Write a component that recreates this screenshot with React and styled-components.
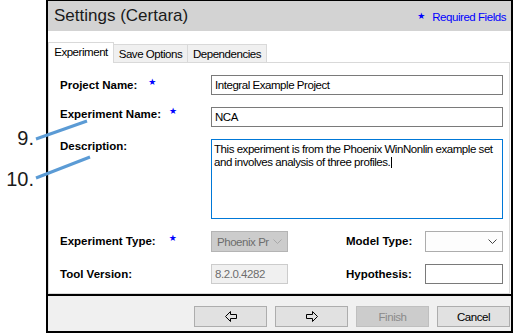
import React from 'react';
import styled, { createGlobalStyle } from 'styled-components';

const FONT = '"Liberation Sans", Arial, sans-serif';

const Global = createGlobalStyle`
  html, body { margin: 0; padding: 0; background: #fff; }
  body { font-family: ${FONT}; width: 515px; height: 334px; overflow: hidden; }
  * { box-sizing: border-box; }
`;

const Page = styled.div`
  position: relative;
  width: 515px;
  height: 334px;
  padding-left: 46px;
`;

const Window = styled.div`
  width: 467px;
  height: 333px;
  border: 2px solid #000;
  border-top-width: 1px;
  display: flex;
  flex-direction: column;
  background: #fff;
`;

const TitleBar = styled.div`
  height: 30px;
  flex: none;
  background: #d3d3d3;
  display: flex;
  align-items: center;
  justify-content: space-between;
  padding: 0 5px 0 6px;
`;

const Title = styled.div`
  font-size: 17px;
  color: #1a1a1a;
`;

const Required = styled.div`
  display: flex;
  align-items: center;
  gap: 7px;
  color: #0000ff;
  font-size: 11.5px;
  letter-spacing: -0.45px;
  padding-top: 2px;
`;

const StarGlyph = styled.span`
  font-family: "DejaVu Sans", sans-serif;
  font-size: 9px;
  color: #0000ff;
  line-height: 1;
  letter-spacing: 0;
  margin-left: ${p => p.$gap || 0}px;
  transform: translateY(${p => p.$lift || 0}px);
`;

const TabStrip = styled.div`
  height: 32px;
  flex: none;
  width: 462px;
  display: flex;
  align-items: flex-end;
`;

const Tab = styled.div`
  width: ${p => p.$w}px;
  height: ${p => (p.$active ? 21 : 19)}px;
  background: ${p => (p.$active ? '#fff' : '#f0f0f0')};
  border: 1px solid #d9d9d9;
  border-bottom: ${p => (p.$active ? 'none' : '1px solid #d9d9d9')};
  border-left-width: ${p => (p.$first ? 1 : 0)}px;
  display: flex;
  align-items: center;
  justify-content: center;
  font-size: 11.5px;
  letter-spacing: -0.45px;
  color: #000;
  padding-bottom: ${p => (p.$active ? 2 : 0)}px;
`;

const TabFill = styled.div`
  flex: 1;
  height: 1px;
  background: #d9d9d9;
`;

const Panel = styled.div`
  width: 462px;
  height: 231px;
  flex: none;
  border: 1px solid #dadada;
  border-top: none;
  padding: 12px 0 0 11px;
`;

const Form = styled.div`
  display: grid;
  grid-template-columns: 151px 77px 58px 79px 78px;
  grid-template-rows: 20px 20px 80px 21px 20px;
  row-gap: 12px;
`;

const Label = styled.div`
  grid-column: ${p => p.$col || 1};
  display: flex;
  align-items: ${p => (p.$top ? 'flex-start' : 'center')};
  padding-top: ${p => (p.$top ? 1 : 0)}px;
  padding-bottom: ${p => p.$raise || 0}px;
  font-weight: bold;
  font-size: 11.5px;
  line-height: 13px;
  color: #000;
  white-space: nowrap;
`;

const Field = styled.div`
  grid-column: ${p => p.$span || 'auto'};
  border: 1px solid ${p => p.$border || '#7a7a7a'};
  background: ${p => p.$bg || '#fff'};
  color: ${p => p.$color || '#000'};
  font-size: 11.5px;
  letter-spacing: -0.45px;
  display: flex;
  align-items: center;
  padding: 0 3px;
  white-space: nowrap;
  overflow: hidden;
`;

const TextArea = styled.div`
  grid-column: 2 / 6;
  border: 1px solid #0078d7;
  background: #fff;
  font-size: 11.5px;
  letter-spacing: -0.45px;
  line-height: 13px;
  padding: 3px 2px;
  color: #000;
`;

const Caret = styled.span`
  display: inline-block;
  width: 1px;
  height: 11px;
  background: #000;
  vertical-align: -2px;
  margin-left: 1px;
`;

const Select = styled.div`
  grid-column: ${p => p.$col};
  border: 1px solid ${p => (p.$disabled ? '#b4b4b4' : '#adadad')};
  background: ${p => (p.$disabled ? '#cccccc' : '#fdfdfd')};
  color: #6d6d6d;
  font-size: 11.5px;
  letter-spacing: -0.45px;
  display: flex;
  align-items: center;
  justify-content: space-between;
  padding: 0 5px 0 5px;
  white-space: nowrap;
  overflow: hidden;
`;

const SelectText = styled.span`
  overflow: hidden;
  flex: 1;
`;

const Footer = styled.div`
  height: 37px;
  flex: none;
  border-top: 2px solid #000;
  background: #f0f0f0;
  display: flex;
  justify-content: flex-end;
  align-items: flex-start;
  gap: 8px;
  padding: 10px 1px 0 0;
`;

const Button = styled.div`
  width: 73px;
  height: 21px;
  border: 1px solid ${p => (p.$disabled ? '#bfbfbf' : '#adadad')};
  background: ${p => (p.$disabled ? '#cccccc' : '#e1e1e1')};
  color: ${p => (p.$disabled ? '#8a8a8a' : '#000')};
  display: flex;
  align-items: center;
  justify-content: center;
  font-size: 11.5px;
  letter-spacing: -0.45px;
`;

const Callouts = styled.svg`
  position: absolute;
  left: 0;
  top: 0;
  pointer-events: none;
`;

const Number = styled.div`
  position: absolute;
  right: ${515 - 34}px;
  top: ${p => p.$top}px;
  font-size: 20px;
  line-height: 20px;
  color: #1a1a1a;
`;

const Chevron = ({ color }) => (
  <svg width="9" height="5" viewBox="0 0 9 5">
    <polyline points="0.5,0.5 4.5,4.5 8.5,0.5" fill="none" stroke={color} strokeWidth="1" />
  </svg>
);

const ArrowLeft = () => (
  <svg width="12" height="11" viewBox="0 0 12 11">
    <polygon points="0.5,5.5 5.5,0.5 5.5,3.5 11.5,3.5 11.5,7.5 5.5,7.5 5.5,10.5" fill="none" stroke="#000" strokeWidth="1" />
  </svg>
);

const ArrowRight = () => (
  <svg width="12" height="11" viewBox="0 0 12 11">
    <polygon points="11.5,5.5 6.5,0.5 6.5,3.5 0.5,3.5 0.5,7.5 6.5,7.5 6.5,10.5" fill="none" stroke="#000" strokeWidth="1" />
  </svg>
);

const Star = ({ gap }) => <StarGlyph $gap={gap} $lift={-3}>★</StarGlyph>;

export default function App() {
  return (
    <>
      <Global />
      <Page>
        <Window>
          <TitleBar>
            <Title>Settings (Certara)</Title>
            <Required>
              <StarGlyph $lift={-1}>★</StarGlyph>
              <span>Required Fields</span>
            </Required>
          </TitleBar>
          <TabStrip>
            <Tab $active $first $w={66}>Experiment</Tab>
            <Tab $w={74}>Save Options</Tab>
            <Tab $w={79}>Dependencies</Tab>
            <TabFill />
          </TabStrip>
          <Panel>
            <Form>
              <Label>Project Name:<Star gap={11} /></Label>
              <Field $span="2 / 6">Integral Example Project</Field>

              <Label $raise={6}>Experiment Name:<Star gap={8} /></Label>
              <Field $span="2 / 6">NCA</Field>

              <Label $top>Description:</Label>
              <TextArea>
                This experiment is from the Phoenix WinNonlin example set
                <br />
                and involves analysis of three profiles.<Caret />
              </TextArea>

              <Label>Experiment Type:<Star gap={13} /></Label>
              <Select $col="2" $disabled>
                <SelectText>Phoenix Pr</SelectText>
                <Chevron color="#a8a8a8" />
              </Select>
              <Label $col={4}>Model Type:</Label>
              <Select $col="5">
                <SelectText />
                <Chevron color="#444" />
              </Select>

              <Label>Tool Version:</Label>
              <Field $span="2" $border="#cccccc" $bg="#f0f0f0" $color="#6d6d6d">8.2.0.4282</Field>
              <Label $col={4}>Hypothesis:</Label>
              <Field $span="5" />
            </Form>
          </Panel>
          <Footer>
            <Button><ArrowLeft /></Button>
            <Button><ArrowRight /></Button>
            <Button $disabled>Finish</Button>
            <Button>Cancel</Button>
          </Footer>
        </Window>
        <Number $top={128}>9.</Number>
        <Number $top={169}>10.</Number>
        <Callouts width="515" height="334" viewBox="0 0 515 334">
          <line x1="36" y1="139" x2="87" y2="121" stroke="#5b9bd5" strokeWidth="3" />
          <line x1="36" y1="178" x2="90" y2="157" stroke="#5b9bd5" strokeWidth="3" />
        </Callouts>
      </Page>
    </>
  );
}
